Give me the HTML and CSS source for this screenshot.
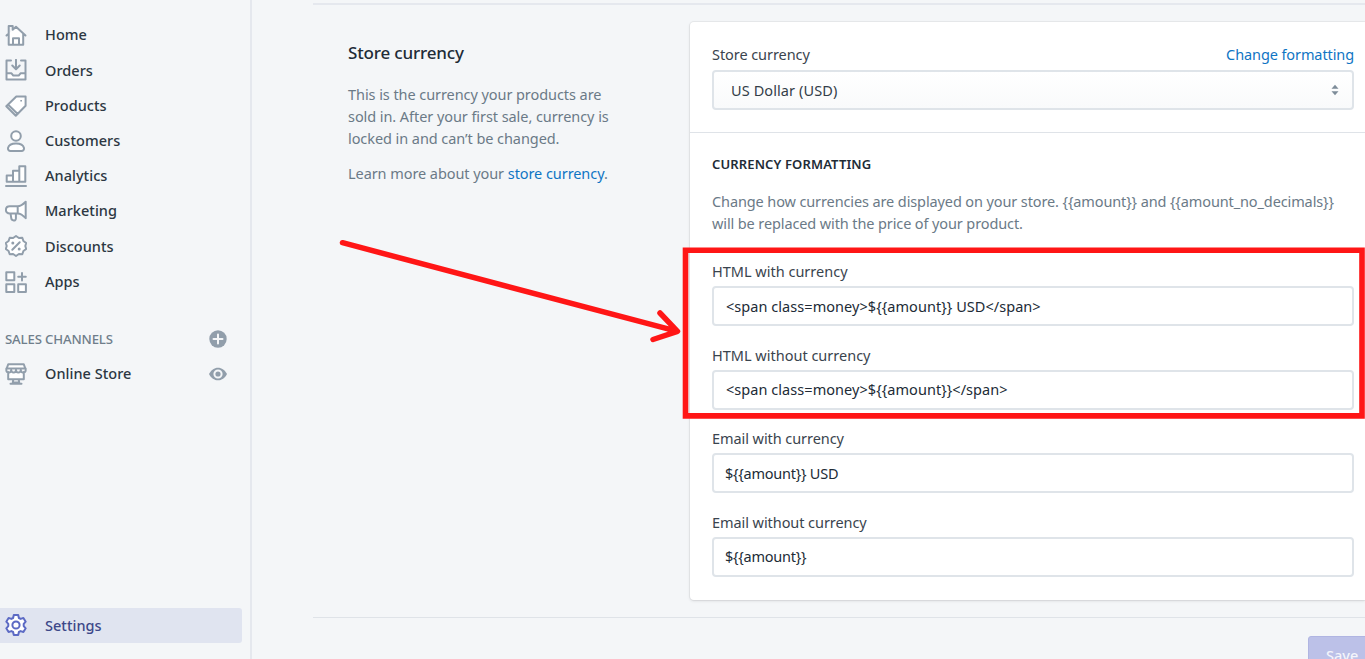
FILE: index.html
```html
<!DOCTYPE html>
<html lang="en">
<head>
<meta charset="utf-8">
<title>Store currency settings</title>
<link rel="stylesheet" href="styles.css">
</head>
<body>
<div class="app">
  <nav class="sidebar">
    <ul class="nav">
      <li class="nav-item"><svg class="icon" viewBox="0 0 22 22"><path class="f" d="M4 20.500V9.500L11 3l7 6.500v11z"/><path d="M1.500 11.500 3.700 9.500V2h4v3.800L11 2.800l9.500 8.700M3.700 9.500v11.200h14.500V9.500M8 20.500v-6.200h6v6.200"/></svg><span>Home</span></li>
      <li class="nav-item"><svg class="icon" viewBox="0 0 22 22"><path class="f" d="M1.500 14.500h5l1.800 2.300h5.400l1.800-2.300h5v6h-19z"/><path d="M6 1.500H1.500v19h19v-19H16M11 .800v9.200M7.300 6.500 11 10.200l3.700-3.700M1.500 14.300h5l1.800 2.300h5.400l1.800-2.300h5"/></svg><span>Orders</span></li>
      <li class="nav-item"><svg class="icon" viewBox="0 0 22 22"><path class="f" d="m11.500 1.500 9-.2v9.200L10.800 20.800 1.300 11.300z"/><path d="M11.300 1.500h9.300v9.200L10.800 20.800 1.300 11.300zM3.200 9.800l9.500 9.200"/><path class="s" d="M15.300 4.900h1.700v1.700h-1.700z"/></svg><span>Products</span></li>
      <li class="nav-item"><svg class="icon" viewBox="0 0 22 22"><circle class="b" cx="11" cy="6" r="4.800"/><path class="b" d="M3 18c.8-3.200 4-4.500 8-4.500s7.200 1.300 8 4.500c.2 1.700-.7 2.900-2.500 2.900h-11C3.700 20.900 2.800 19.700 3 18z"/></svg><span>Customers</span></li>
      <li class="nav-item"><svg class="icon" viewBox="0 0 22 22"><path class="b" d="M1.700 10.500H8v6.200H1.700zM8 5.700h6.300v11H8zM14.300 1.200h6v15.500h-6z"/><path d="M1 20.900h20"/></svg><span>Analytics</span></li>
      <li class="nav-item"><svg class="icon" viewBox="0 0 22 22"><path class="b" d="M4.700 6.300h8C16 6.300 18 4.500 20.700 1.800v16.400c-2.700-3-4.700-4.800-8-4.800h-8C2.500 13.400.900 12 .900 9.900s1.600-3.600 3.800-3.600zM12.700 6.300v7.100M5.500 13.400l.8 5c.3 2.300 4.600 3 4.600.2v-5.200"/></svg><span>Marketing</span></li>
      <li class="nav-item"><svg class="icon" viewBox="0 0 22 22"><path class="b" d="m11 1 2.900 2 3.400-.3 1.100 3.300 2.800 2-.9 3 .9 3-2.800 2-1.100 3.300-3.400-.3-2.900 2-2.900-2-3.400.3L3.600 16 .8 14l.9-3-.9-3 2.800-2 1.100-3.300 3.400.3z"/><path d="m7.300 14.700 7.400-7.400"/><circle class="s" cx="7.800" cy="7.900" r="1.500"/><circle class="s" cx="14.200" cy="14.100" r="1.500"/></svg><span>Discounts</span></li>
      <li class="nav-item"><svg class="icon" viewBox="0 0 22 22"><path class="b" d="M1.300 1.300h8v8h-8zM1.300 13.200h8v7.700h-8zM13.200 13.200h7.700v7.700h-7.700z"/><path d="M17 2v7.500M13.200 5.700h7.600"/></svg><span>Apps</span></li>
    </ul>
    <div class="nav-heading"><span>SALES CHANNELS</span><svg class="small-icon" viewBox="0 0 18 18"><circle class="s" cx="9" cy="9" r="8.700"/><path class="w" d="M9 4.500v9M4.500 9h9"/></svg></div>
    <div class="nav-item nav-channel"><svg class="icon" viewBox="0 0 22 22"><path class="f" d="M3 8h16v8H3zM3 1h16l1.500 6h-19z"/><path d="M3.300 1.200h15.400l2 5.300c.3 4-4.600 4.200-4.900.5-.2 3.400-4.700 3.400-4.800 0-.1 3.400-4.600 3.400-4.800 0-.3 3.700-5.200 3.500-4.900-.5zM1.300 5.600h19.400M3.200 9v7.300h15.600V9M8.300 16.500l-.5 3h6.400l-.5-3M5.500 20.800h11"/></svg><span>Online Store</span><svg class="small-icon" viewBox="0 0 18 18"><path class="s" d="M0 9c2-4 5.300-6.300 9-6.300S16 5 18 9c-2 4-5.300 6.300-9 6.300S2 13 0 9z"/><circle class="w" cx="9" cy="9" r="3.600"/></svg></div>
    <div class="nav-item nav-settings"><svg class="icon" viewBox="0 0 22 22"><path class="b" d="M8.800 1.100h4.400l.7 2.900 1.700.9 2.800-.9 2.300 3.700-2 2.200v2.200l2 2.200-2.300 3.700-2.800-.9-1.700.9-.7 2.900H8.800L8.100 18l-1.700-.9-2.800.9-2.300-3.700 2-2.200V9.900l-2-2.200L3.600 4l2.800.9L8.100 4z"/><circle class="b" cx="11" cy="11" r="3.600"/></svg><span>Settings</span></div>
  </nav>
  <main class="main">
    <section class="group">
      <div class="intro">
        <h2>Store currency</h2>
        <p class="p1">This is the currency your products are<br>sold in. After your first sale, currency is<br>locked in and can’t be changed.</p>
        <p class="p2">Learn more about your <a class="link">store currency</a>.</p>
      </div>
      <div class="card">
        <div class="section top">
          <div class="label-row"><span class="label">Store currency</span><a class="link">Change formatting</a></div>
          <div class="field select"><span>US Dollar (USD)</span><svg class="sort" viewBox="0 0 8 12"><path d="M.500 4.700 4 .700l3.500 4zM.500 7.300h7L4 11.300z"/></svg></div>
        </div>
        <div class="section formats">
          <h3>CURRENCY FORMATTING</h3>
          <p class="help">Change how currencies are displayed on your store. {{amount}} and {{amount_no_decimals}}<br>will be replaced with the price of your product.</p>
          <div class="form-row"><span class="label html">HTML with currency</span><div class="field"><span class="code">&lt;span class=money&gt;${{amount}} USD&lt;/span&gt;</span></div></div>
          <div class="form-row"><span class="label html">HTML without currency</span><div class="field"><span class="code">&lt;span class=money&gt;${{amount}}&lt;/span&gt;</span></div></div>
          <div class="form-row"><span class="label">Email with currency</span><div class="field"><span>${{amount}} USD</span></div></div>
          <div class="form-row"><span class="label">Email without currency</span><div class="field"><span>${{amount}}</span></div></div>
        </div>
      </div>
    </section>
    <footer class="footer"><button class="save">Save</button></footer>
  </main>
  <svg class="annotation" viewBox="0 0 1365 659"><path class="frame" d="M685.500 250.300H1362v165.600H685.500z"/><path class="arrow" d="m342.500 242.700 334 88.500M660 313l17.500 18.300L653 339.500"/></svg>
</div>
</body>
</html>
```

FILE: styles.css
```css
* { box-sizing: border-box; }
body { margin: 0; background: #f4f6f8; font: 14.5px/22px "Noto Sans", "Open Sans", sans-serif; color: #212b36; }
h2, h3, p, ul { margin: 0; padding: 0; }
.app { position: relative; display: flex; width: 1365px; height: 659px; overflow: hidden; }
.sidebar { display: flex; flex-direction: column; flex: 0 0 252px; padding: 17.600px 8px 16px 0; border-right: 2px solid #e5e8ee; }
.nav { list-style: none; }
.nav-item { display: flex; align-items: center; height: 35.200px; padding-left: 5px; gap: 18px; color: #2c3742; font-weight: 500; letter-spacing: .03px; white-space: nowrap; }
.nav-item span { flex: 1; padding-bottom: 1.400px; }
.icon { width: 22px; height: 22px; flex: none; margin-right: 0; fill: none; stroke: #919eab; stroke-width: 2; stroke-linejoin: round; stroke-linecap: round; }
.icon .f { fill: #fff; stroke: none; }
.icon .b { fill: #fff; }
.icon .s { fill: #919eab; stroke: none; }
.nav-heading { display: flex; align-items: center; justify-content: space-between; height: 35.200px; margin-top: 22px; padding: 0 15.500px 0 5px; color: #6f7e8b; font-size: 13.200px; font-weight: 500; letter-spacing: -.15px; }
.small-icon { width: 18px; height: 18px; flex: none; }
.small-icon .s { fill: #919eab; }
.small-icon .w { fill: none; stroke: #f4f6f8; stroke-width: 2; stroke-linecap: round; }
.nav-channel { padding-right: 15.500px; }
.nav-settings { margin-top: auto; background: #e0e4f0; border-radius: 0 3px 3px 0; color: #3d4889; }
.nav-settings .icon { stroke: #5c6ac4; }
.main { flex: 1; min-width: 0; padding: 3px 0 0 61px; }
.group { display: flex; border-top: 2px solid #e5e8ee; padding: 17px 0 17px 35px; }
.intro { flex: 0 0 342px; padding-top: 19px; color: #6b7a87; letter-spacing: -.07px; white-space: nowrap; }
h2 { font-size: 17px; line-height: 24px; font-weight: 500; color: #212b36; letter-spacing: -.16px; }
.p1 { margin-top: 18px; }
.p2 { margin-top: 13px; }
.link { color: #0f75c4; }
.card { flex: 1; height: 578px; background: #fff; border-radius: 4px 0 0 4px; box-shadow: 0 0 0 1px rgba(63,63,68,.06), 0 1px 3px 0 rgba(63,63,68,.15); }
.section { padding: 0 11px 0 22px; }
.top { height: 111px; padding-top: 21px; border-bottom: 1px solid #dfe3e8; }
.label-row { display: flex; justify-content: space-between; line-height: 22px; margin-bottom: 5px; letter-spacing: -.1px; }
.label { letter-spacing: -.07px; color: #3a444e; }
.html { letter-spacing: 0; }
.field { display: flex; align-items: center; height: 40px; padding-left: 11px; border: 2px solid #dfe4e9; border-radius: 4px; background: #fff; letter-spacing: -.24px; }
.field span { padding-bottom: 1px; }
.field .code { padding-left: 1px; letter-spacing: .05px; }
.select { justify-content: space-between; padding: 0 13px 0 17px; background: linear-gradient(#fff, #f9fafb); letter-spacing: .1px; color: #333e49; }
.sort { width: 8px; height: 12px; fill: #7d8c99; }
.formats { padding-top: 20px; }
h3 { font-size: 13px; line-height: 22px; font-weight: 600; letter-spacing: .13px; }
.help { margin: 15px 0 26px; color: #6b7a87; white-space: nowrap; letter-spacing: -.115px; }
.form-row { display: flex; flex-direction: column; gap: 4px; height: 83.600px; line-height: 22px; }
.footer { display: flex; justify-content: flex-end; padding-top: 18px; border-top: 1px solid #dfe3e8; }
.save { flex: none; width: 75px; height: 40px; margin-right: -18px; padding: 0 0 2px 17px; text-align: left; border: 1px solid #b0b5e2; border-radius: 3px; background: #bcc1e8; color: #f4f5fb; font: 500 14.500px/20px "Noto Sans", sans-serif; }
.annotation { position: absolute; left: 0; top: 0; width: 1365px; height: 659px; fill: none; stroke: #ff1616; pointer-events: none; }
.frame { stroke-width: 5.600; }
.arrow { stroke-width: 5.500; stroke-linecap: round; stroke-linejoin: round; }
```
